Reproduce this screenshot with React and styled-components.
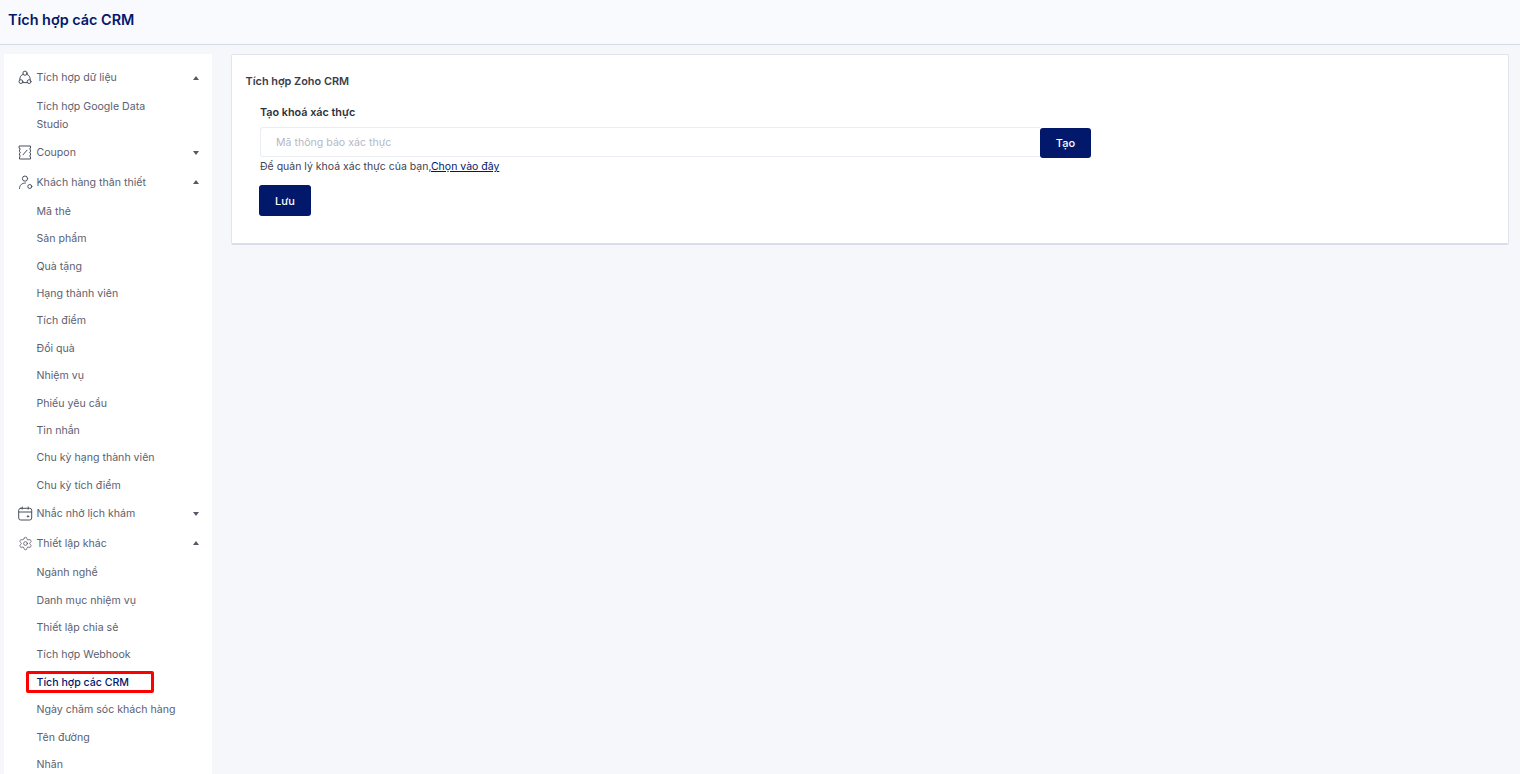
import React from "react";
import styled, { createGlobalStyle } from "styled-components";
import { Settings } from "lucide-react";

const Global = createGlobalStyle`
  html, body { margin: 0; padding: 0; height: 100%; overflow: hidden; background: #f5f7fb; }
  * { box-sizing: border-box; }
  body { font-family: Inter, "Noto Sans", sans-serif; }
`;

const Page = styled.div`
  display: flex;
  flex-direction: column;
  height: 774px;
  width: 1520px;
  overflow: hidden;
`;

const Header = styled.header`
  flex: 0 0 45px;
  display: flex;
  align-items: center;
  padding: 0 8px 5px;
  background: #f9fafd;
  border-bottom: 1px solid #d5dde9;
`;

const Title = styled.h1`
  margin: 0;
  font-size: 14.4px;
  line-height: 20px;
  font-weight: 600;
  color: #02186b;
`;

const Body = styled.div`
  flex: 1;
  min-height: 0;
  display: flex;
  gap: 19px;
  padding: 9px 11px 0 4px;
`;

const Sidebar = styled.nav`
  flex: 0 0 208px;
  background: #fff;
  overflow: hidden;
`;

const Menu = styled.div`
  margin-top: -18.4px;
  display: flex;
  flex-direction: column;
`;

const SubMenu = styled.div`
  padding-top: ${(p) => p.$pad}px;
`;

const ParentRow = styled.div`
  height: 29.5px;
  display: flex;
  align-items: center;
  padding: 0 13px 1px 14px;
  font-size: 10.6px;
  color: #5c6070;
`;

const IconSlot = styled.span`
  flex: 0 0 19px;
  display: flex;
  color: #4a4f5e;
`;

const ParentLabel = styled.span`
  flex: 1;
  margin-left: -0.5px;
`;

const Caret = styled.span`
  width: 0;
  height: 0;
  border-left: 3.5px solid transparent;
  border-right: 3.5px solid transparent;
  ${(p) =>
    p.$open
      ? "border-bottom: 4px solid #555a68;"
      : "border-top: 4px solid #555a68;"}
`;

const ChildRow = styled.div`
  position: relative;
  padding: 4.7px 50px 4.7px 32.5px;
  font-size: 10.6px;
  line-height: 18px;
  color: ${(p) => (p.$active ? "#02186b" : "#5c6070")};
  font-weight: ${(p) => (p.$active ? 500 : 400)};
  white-space: ${(p) => (p.$wrap ? "normal" : "nowrap")};
`;

const ClippedRow = styled(ChildRow)`
  margin-bottom: 0.4px;
`;

const Highlight = styled.span`
  position: absolute;
  left: 22px;
  top: 2px;
  width: 128px;
  height: 22px;
  border: 3px solid #f00;
  border-radius: 2px;
`;

const Card = styled.section`
  flex: 1;
  align-self: flex-start;
  height: 191px;
  background: #fff;
  border: 1px solid #dfe4ee;
  border-bottom: 2px solid #d9dfea;
  border-radius: 2px;
  padding: 18px 14px 0 13.5px;
`;

const CardTitle = styled.h2`
  margin: 0;
  font-size: 10.9px;
  line-height: 16px;
  font-weight: 600;
  color: #3a3d48;
`;

const Form = styled.div`
  padding: 16px 0 0 14.5px;
  display: flex;
  flex-direction: column;
  align-items: flex-start;
`;

const Label = styled.label`
  font-size: 10.8px;
  line-height: 16px;
  font-weight: 600;
  color: #2f323c;
`;

const InputRow = styled.div`
  display: flex;
  align-items: flex-start;
  margin-top: 6px;
`;

const Input = styled.input`
  width: 780px;
  height: 30px;
  border: 1px solid #eaedf3;
  border-right: none;
  border-radius: 3px 0 0 3px;
  padding: 0 15px;
  font: 400 10.6px Inter, sans-serif;
  outline: none;
  &::placeholder { color: #b4b8c6; opacity: 1; }
`;

const Button = styled.button`
  width: ${(p) => p.$w}px;
  height: ${(p) => p.$h}px;
  margin-top: ${(p) => p.$mt || 0}px;
  margin-left: ${(p) => p.$ml || 0}px;
  background: #02186b;
  color: #fff;
  border: none;
  border-radius: 3px;
  font: 500 11px Inter, sans-serif;
`;

const Hint = styled.p`
  margin: 1px 0 0;
  font-size: 10.5px;
  line-height: 16px;
  color: #3f424d;
`;

const HintLink = styled.a`
  color: #02186b;
  text-decoration: underline;
`;

const I = ({ children }) => (
  <IconSlot>
    <svg width="15" height="15" viewBox="0 0 15 15" fill="none" stroke="currentColor" strokeWidth="1" strokeLinecap="round" strokeLinejoin="round">
      {children}
    </svg>
  </IconSlot>
);

const DataIcon = () => (
  <I>
    <circle cx="7" cy="3.2" r="2.1" />
    <circle cx="2.9" cy="11.6" r="1.9" />
    <circle cx="11.1" cy="11.6" r="1.9" />
    <path d="M5.2 4.2 A5.5 5.5 0 0 0 1.8 9.9 M8.8 4.2 A5.5 5.5 0 0 1 12.2 9.9 M4.8 12.6 H9.2" />
  </I>
);
const CouponIcon = () => (
  <I>
    <path d="M1.5 1 H12.5 V3.2 A0.8 0.8 0 0 0 12.5 4.8 V6.7 A0.8 0.8 0 0 0 12.5 8.3 V10.2 A0.8 0.8 0 0 0 12.5 11.8 V14 H1.5 V11.8 A0.8 0.8 0 0 0 1.5 10.2 V8.3 A0.8 0.8 0 0 0 1.5 6.7 V4.8 A0.8 0.8 0 0 0 1.5 3.2 Z" />
    <path d="M5 9.8 L9 5.2" />
  </I>
);
const UserIcon = () => (
  <I>
    <circle cx="7" cy="3.6" r="2.6" />
    <path d="M1.5 13.5 C1.5 10 4 8 7.5 8" />
    <circle cx="11.8" cy="11.5" r="2" />
  </I>
);
const CalendarIcon = () => (
  <I>
    <rect x="0.7" y="2.3" width="13" height="11.7" rx="2" />
    <path d="M0.7 6 H13.7 M4.2 1 V3.2 M10.2 1 V3.2" />
    <circle cx="10" cy="10.4" r="0.7" fill="currentColor" />
  </I>
);
const GearIcon = () => (
  <IconSlot>
    <Settings size={15} strokeWidth={1.2} />
  </IconSlot>
);

const Parent = ({ icon, label, open }) => (
  <ParentRow>
    {icon}
    <ParentLabel>{label}</ParentLabel>
    <Caret $open={open} />
  </ParentRow>
);

const loyalty = ["Mã thẻ", "Sản phẩm", "Quà tặng", "Hạng thành viên", "Tích điểm", "Đổi quà", "Nhiệm vụ", "Phiếu yêu cầu", "Tin nhắn", "Chu kỳ hạng thành viên", "Chu kỳ tích điểm"];
const other = ["Ngành nghề", "Danh mục nhiệm vụ", "Thiết lập chia sẻ", "Tích hợp Webhook"];
const after = ["Ngày chăm sóc khách hàng", "Tên đường", "Nhãn"];

export default function App() {
  return (
    <Page>
      <Global />
      <Header>
        <Title>Tích hợp các CRM</Title>
      </Header>
      <Body>
        <Sidebar>
          <Menu>
            <ClippedRow>Nhóm quyền gốc</ClippedRow>
            <Parent icon={<DataIcon />} label="Tích hợp dữ liệu" open />
            <ChildRow $wrap>Tích hợp Google Data Studio</ChildRow>
            <Parent icon={<CouponIcon />} label="Coupon" />
            <Parent icon={<UserIcon />} label="Khách hàng thân thiết" open />
            <SubMenu $pad={1}>
              {loyalty.map((t) => <ChildRow key={t}>{t}</ChildRow>)}
            </SubMenu>
            <Parent icon={<CalendarIcon />} label="Nhắc nhở lịch khám" />
            <Parent icon={<GearIcon />} label="Thiết lập khác" open />
            <SubMenu $pad={1.3}>
              {other.map((t) => <ChildRow key={t}>{t}</ChildRow>)}
              <ChildRow $active>Tích hợp các CRM<Highlight /></ChildRow>
              {after.map((t) => <ChildRow key={t}>{t}</ChildRow>)}
            </SubMenu>
          </Menu>
        </Sidebar>
        <Card>
          <CardTitle>Tích hợp Zoho CRM</CardTitle>
          <Form>
            <Label>Tạo khoá xác thực</Label>
            <InputRow>
              <Input placeholder="Mã thông báo xác thực" />
              <Button $w={51} $h={30} $mt={1}>Tạo</Button>
            </InputRow>
            <Hint>Để quản lý khoá xác thực của bạn,<HintLink>Chọn vào đây</HintLink></Hint>
            <Button $w={52} $h={31} $mt={10} $ml={-1}>Lưu</Button>
          </Form>
        </Card>
      </Body>
    </Page>
  );
}
